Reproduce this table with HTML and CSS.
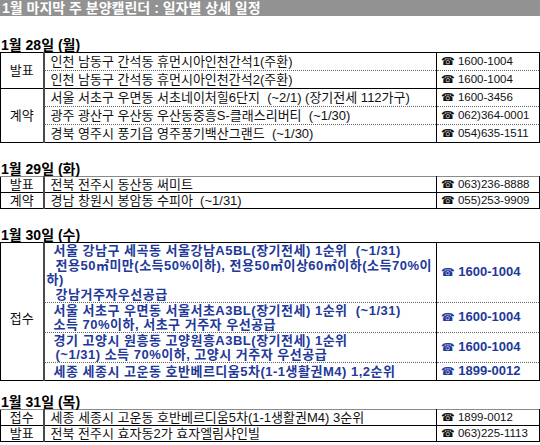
FILE: index.html
```html
<!DOCTYPE html>
<html lang="ko">
<head>
<meta charset="utf-8">
<title>1월 마지막 주 분양캘린더</title>
<link rel="stylesheet" href="styles.css">
</head>
<body>
<div class="title">1월 마지막 주 분양캘린더 : 일자별 상세 일정</div>

<section class="day d1">
<h2>1월 28일 (월)</h2>
<table class="sched">
<colgroup><col class="c-lbl"><col class="c-main"><col class="c-tel"></colgroup>
<tr><td class="lbl" rowspan="2">발표</td><td class="main">인천 남동구 간석동 휴먼시아인천간석1(주환)</td><td class="tel"><span class="ph">☎</span> 1600-1004</td></tr>
<tr class="dot"><td class="main">인천 남동구 간석동 휴먼시아인천간석2(주환)</td><td class="tel"><span class="ph">☎</span> 1600-1004</td></tr>
<tr class="grp"><td class="lbl" rowspan="3">계약</td><td class="main">서울 서초구 우면동 서초네이처힐6단지 &nbsp;(~2/1) (장기전세 112가구)</td><td class="tel"><span class="ph">☎</span> 1600-3456</td></tr>
<tr class="dot"><td class="main">광주 광산구 우산동 우산동중흥S-클래스리버티 &nbsp;(~1/30)</td><td class="tel"><span class="ph">☎</span> 062)364-0001</td></tr>
<tr class="dot tall"><td class="main">경북 영주시 풍기읍 영주풍기백산그랜드 &nbsp;(~1/30)</td><td class="tel"><span class="ph">☎</span> 054)635-1511</td></tr>
</table>
</section>

<section class="day d2">
<h2>1월 29일 (화)</h2>
<table class="sched compact soft-top">
<colgroup><col class="c-lbl"><col class="c-main"><col class="c-tel"></colgroup>
<tr><td class="lbl">발표</td><td class="main">전북 전주시 동산동 써미트</td><td class="tel"><span class="ph">☎</span> 063)236-8888</td></tr>
<tr class="grp"><td class="lbl">계약</td><td class="main">경남 창원시 봉암동 수피아 &nbsp;(~1/31)</td><td class="tel"><span class="ph">☎</span> 055)253-9909</td></tr>
</table>
</section>

<section class="day d3">
<h2>1월 30일 (수)</h2>
<table class="sched blue">
<colgroup><col class="c-lbl"><col class="c-main"><col class="c-tel"></colgroup>
<tr>
<td class="lbl low" rowspan="4">접수</td>
<td class="main four"><div class="ln in">서울 강남구 세곡동 서울강남A5BL(장기전세) 1순위 &nbsp;(~1/31)</div><div class="ln in2">전용50㎡미만(소득50%이하), 전용50㎡이상60㎡이하(소득70%이</div><div class="ln">하)</div><div class="ln in2">강남거주자우선공급</div></td>
<td class="tel"><span class="ph">☎</span> 1600-1004</td>
</tr>
<tr class="dot">
<td class="main"><div class="ln in">서울 서초구 우면동 서울서초A3BL(장기전세) 1순위 &nbsp;(~1/31)</div><div class="ln in">소득 70%이하, 서초구 거주자 우선공급</div></td>
<td class="tel"><span class="ph">☎</span> 1600-1004</td>
</tr>
<tr class="dot">
<td class="main"><div class="ln in">경기 고양시 원흥동 고양원흥A3BL(장기전세) 1순위</div><div class="ln in2">(~1/31) 소득 70%이하, 고양시 거주자 우선공급</div></td>
<td class="tel"><span class="ph">☎</span> 1600-1004</td>
</tr>
<tr class="dot">
<td class="main"><div class="ln in">세종 세종시 고운동 호반베르디움5차(1-1생활권M4) 1,2순위</div></td>
<td class="tel"><span class="ph">☎</span> 1899-0012</td>
</tr>
</table>
</section>

<section class="day d4">
<h2>1월 31일 (목)</h2>
<table class="sched compact soft-top">
<colgroup><col class="c-lbl"><col class="c-main"><col class="c-tel"></colgroup>
<tr><td class="lbl">접수</td><td class="main">세종 세종시 고운동 호반베르디움5차(1-1생활권M4) 3순위</td><td class="tel"><span class="ph">☎</span> 1899-0012</td></tr>
<tr class="grp"><td class="lbl">발표</td><td class="main">전북 전주시 효자동2가 효자엘림샤인빌</td><td class="tel"><span class="ph">☎</span> 063)225-1113</td></tr>
</table>
</section>
</body>
</html>
```

FILE: styles.css
```css
html, body {
  margin: 0;
  padding: 0;
  background: #ffffff;
}

body {
  width: 540px;
  font-family: "Liberation Sans", "Noto Sans CJK KR", sans-serif;
  font-size: 13px;
  color: #111111;
}

.title {
  background: #929292;
  color: #ffffff;
  font-weight: bold;
  font-size: 14px;
  height: 16px;
  line-height: 16px;
  padding-left: 2px;
}

.day h2 {
  margin: 0;
  font-size: 14px;
  font-weight: bold;
  line-height: 14px;
  height: 14px;
  padding-left: 1px;
  color: #000000;
}

.d1 { margin-top: 22px; }
.d2 { margin-top: 19px; }
.d3 { margin-top: 19px; }
.d4 { margin-top: 14px; }

.sched {
  width: 540px;
  table-layout: fixed;
  border-collapse: collapse;
  border: 1px solid #000000;
}

.sched.soft-top {
  border-top-color: #8a8a8a;
}

.c-lbl { width: 43px; }
.c-tel { width: 103px; }

.sched td {
  height: 16px;
  line-height: 16px;
  padding: 0;
  white-space: nowrap;
  overflow: hidden;
  vertical-align: middle;
}

.sched.compact td {
  height: 15px;
  line-height: 15px;
}

.sched td.lbl {
  text-align: center;
  border-right: 2px solid #4a4a4a;
}

.sched td.lbl.low {
  padding-top: 14px;
}

.sched td.main {
  padding-left: 6px;
}

.sched td.tel {
  border-left: 1px solid #000000;
  padding-left: 4px;
  font-size: 11.5px;
}

.ph {
  font-family: "DejaVu Sans", sans-serif;
  font-size: 11px;
}

.sched tr.dot td {
  border-top: 1px dotted #666666;
}

.sched tr.grp td {
  border-top: 1px solid #000000;
}

.sched tr.tall td {
  height: 17px;
}

/* blue highlighted block */
.sched.blue td.main,
.sched.blue td.tel {
  color: #22399a;
  font-weight: bold;
}

.sched.blue td.main {
  font-size: 13px;
  letter-spacing: 0.5px;
  padding: 1px 0 0 2px;
}

.sched.blue td.tel {
  font-size: 13px;
}

.sched.blue td.lbl {
  color: #111111;
}

.ln {
  line-height: 14px;
  height: 14px;
}

.four .ln {
  line-height: 14.5px;
  height: 14.5px;
}

.ln.in { padding-left: 7px; }
.ln.in2 { padding-left: 9px; }
```
